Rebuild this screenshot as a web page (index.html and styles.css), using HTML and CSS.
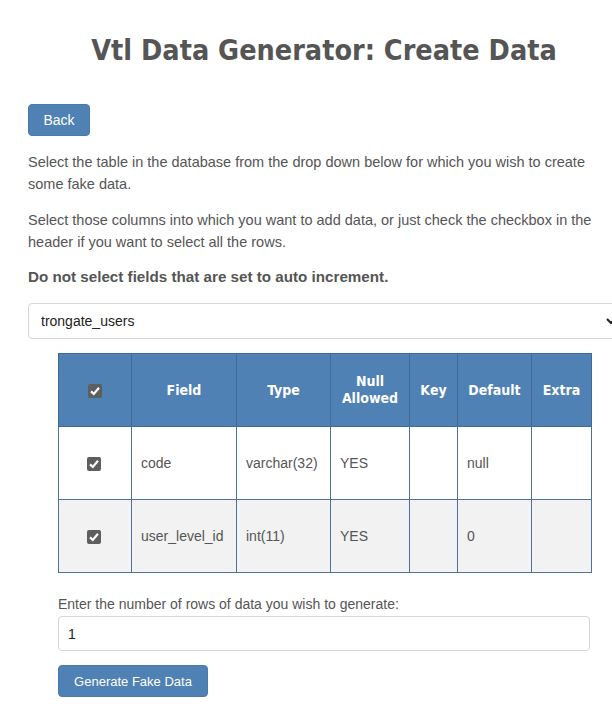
FILE: index.html
```html
<!DOCTYPE html>
<html>
<head>
<meta charset="utf-8">
<link rel="stylesheet" href="styles.css">
</head>
<body>
<div class="container">
  <h1 class="title">Vtl Data Generator: Create Data</h1>
  <button class="btn btn-back">Back</button>
  <p class="text">Select the table in the database from the drop down below for which you wish to create some fake data.</p>
  <p class="text">Select those columns into which you want to add data, or just check the checkbox in the header if you want to select all the rows.</p>
  <p class="text strong">Do not select fields that are set to auto increment.</p>
  <select class="select"><option>trongate_users</option></select>
  <div class="inner">
    <table class="grid">
      <colgroup>
        <col class="c1"><col class="c2"><col class="c3"><col class="c4"><col class="c5"><col class="c6"><col class="c7">
      </colgroup>
      <thead>
        <tr>
          <th><span class="cb"><svg viewBox="0 0 14 14" width="14" height="14"><path d="M3 7.4 L5.8 10 L11 3.8" fill="none" stroke="#fff" stroke-width="2.2"/></svg></span></th>
          <th>Field</th>
          <th>Type</th>
          <th>Null<br>Allowed</th>
          <th>Key</th>
          <th>Default</th>
          <th>Extra</th>
        </tr>
      </thead>
      <tbody>
        <tr>
          <td class="center"><span class="cb"><svg viewBox="0 0 14 14" width="14" height="14"><path d="M3 7.4 L5.8 10 L11 3.8" fill="none" stroke="#fff" stroke-width="2.2"/></svg></span></td>
          <td>code</td>
          <td>varchar(32)</td>
          <td>YES</td>
          <td></td>
          <td>null</td>
          <td></td>
        </tr>
        <tr class="alt">
          <td class="center"><span class="cb"><svg viewBox="0 0 14 14" width="14" height="14"><path d="M3 7.4 L5.8 10 L11 3.8" fill="none" stroke="#fff" stroke-width="2.2"/></svg></span></td>
          <td>user_level_id</td>
          <td>int(11)</td>
          <td>YES</td>
          <td></td>
          <td>0</td>
          <td></td>
        </tr>
      </tbody>
    </table>
    <label class="label">Enter the number of rows of data you wish to generate:</label>
    <input class="input" type="text" value="1">
    <button class="btn btn-gen">Generate Fake Data</button>
  </div>
</div>
</body>
</html>
```

FILE: styles.css
```css
html, body {
  margin: 0;
  padding: 0;
  background: #fff;
}
body {
  font-family: "Liberation Sans", Arial, sans-serif;
  color: #555;
  font-size: 14px;
}
.container {
  width: 592px;
  padding-left: 28px;
  display: flex;
  flex-direction: column;
  align-items: flex-start;
}
.title {
  align-self: stretch;
  text-align: center;
  font-family: "DejaVu Sans Condensed", "DejaVu Sans", sans-serif;
  font-weight: bold;
  font-size: 28.5px;
  line-height: 36px;
  margin: 33px 0 0 0;
  color: #555;
}
.btn {
  background: #4f81b5;
  color: #fff;
  border: 1px solid #4a7aab;
  border-radius: 4px;
  font-family: "Liberation Sans", Arial, sans-serif;
  font-size: 14px;
  padding: 0;
  cursor: pointer;
}
.btn-back {
  margin-top: 35px;
  width: 62px;
  height: 32px;
}
.text {
  margin: 0;
  line-height: 22px;
  width: 580px;
  font-size: 14.5px;
}
.btn-back + .text {
  margin-top: 15px;
}
.text + .text {
  margin-top: 14px;
}
.strong {
  font-weight: bold;
  font-size: 15.2px;
  margin-top: 13px !important;
}
.select {
  margin-top: 15px;
  width: 592px;
  height: 36px;
  border: 1px solid #d6d6d6;
  border-radius: 4px;
  background: #fff;
  color: #222;
  font-family: "Liberation Sans", Arial, sans-serif;
  font-size: 14px;
  padding: 0 8px;
}
.inner {
  margin-left: 30px;
  margin-top: 14px;
  display: flex;
  flex-direction: column;
  align-items: flex-start;
}
.grid {
  border-collapse: collapse;
  table-layout: fixed;
  width: 533px;
  font-family: "Liberation Sans", Arial, sans-serif;
  font-size: 14px;
}
.c1 { width: 73px; }
.c2 { width: 105px; }
.c3 { width: 94px; }
.c4 { width: 79px; }
.c5 { width: 48px; }
.c6 { width: 74px; }
.c7 { width: 60px; }
.grid th {
  background: #4f81b5;
  color: #fff;
  font-family: "DejaVu Sans Condensed", "DejaVu Sans", sans-serif;
  font-weight: bold;
  font-size: 14px;
  height: 72px;
  padding: 0 2px;
  border: 1px solid #3d6a99;
  line-height: 17px;
  text-align: center;
  vertical-align: middle;
}
.grid td {
  height: 72px;
  padding: 0 9px;
  border: 1px solid #4f729a;
  color: #555;
  vertical-align: middle;
}
.grid tbody tr:first-child td {
  border-top-color: #3d6a99;
}
.grid td.center {
  text-align: center;
  padding-left: 8px;
  padding-right: 10px;
}
.grid .alt td {
  background: #f2f2f2;
}
.cb {
  display: inline-block;
  width: 14px;
  height: 14px;
  background: #5e5e5e;
  border-radius: 2px;
  vertical-align: middle;
}
.cb svg {
  display: block;
}
.label {
  margin-top: 22px;
  line-height: 18px;
  font-size: 14px;
}
.input {
  margin-top: 3px;
  width: 532px;
  height: 35px;
  box-sizing: border-box;
  border: 1px solid #d6d6d6;
  border-radius: 4px;
  padding: 0 9px;
  font-family: "Liberation Sans", Arial, sans-serif;
  font-size: 14px;
  color: #222;
}
.btn-gen {
  margin-top: 14px;
  width: 150px;
  height: 32px;
  font-size: 13px;
}
```
